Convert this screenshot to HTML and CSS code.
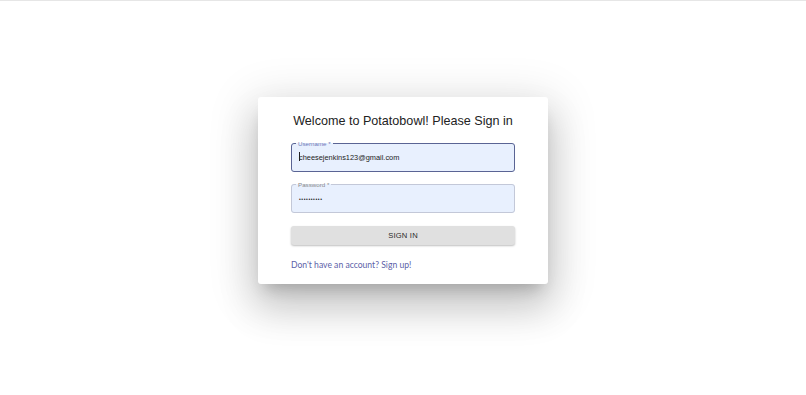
FILE: index.html
```html
<!DOCTYPE html>
<html>
<head>
<meta charset="utf-8">
<link rel="stylesheet" href="styles.css">
</head>
<body>
<div class="topline"></div>
<main class="page">
  <section class="card">
    <h1 class="title">Welcome to Potatobowl! Please Sign in</h1>
    <fieldset class="field field-focus">
      <legend class="legend legend-focus">Username *</legend>
      <div class="value"><span class="caret"></span>cheesejenkins123@gmail.com</div>
    </fieldset>
    <fieldset class="field">
      <legend class="legend">Password *</legend>
      <div class="value dots">••••••••••</div>
    </fieldset>
    <button class="btn">SIGN IN</button>
    <a class="link" href="#">Don't have an account? Sign up!</a>
  </section>
</main>
</body>
</html>
```
FILE: styles.css
```css
html, body { margin: 0; padding: 0; background: #fff; }
body { width: 806px; height: 395px; overflow: hidden; font-family: "Liberation Sans", Arial, sans-serif; }
.topline { height: 1px; background: #e6e6e6; }
.page { display: flex; justify-content: center; padding-top: 96px; }
.card {
  width: 290px; box-sizing: border-box;
  padding: 14px 33px 13px;
  background: #fff; border-radius: 3px;
  box-shadow: 0 11px 15px -7px rgba(0,0,0,0.2), 0 24px 38px 3px rgba(0,0,0,0.14), 0 9px 46px 8px rgba(0,0,0,0.12);
  display: flex; flex-direction: column;
}
.title { margin: 0 0 9px; font-size: 12.6px; font-weight: normal; color: #222; text-align: center; line-height: 20px; }
.field {
  margin: 0 0 9px; padding: 0 7px 7px; min-width: 0;
  border: 1px solid #c3c8d8; border-radius: 3px; background: #e8f0fe;
}
.field-focus { border: 1.5px solid #5a6494; padding-bottom: 7px; }
.field + .field { margin-bottom: 12px; }
.legend { font-size: 6.2px; color: #8a8a8a; padding: 0 2px; margin-left: -3px; line-height: 7px; }
.legend-focus { color: #6d78b8; }
.value { font-size: 7.4px; color: #222; line-height: 12px; height: 12px; margin-top: 5px; }
.caret { display: inline-block; width: 1px; height: 9px; background: #222; vertical-align: -1px; margin-right: -1px; }
.dots { font-size: 5px; letter-spacing: 0.6px; }
.btn {
  margin: 1px 0 0; height: 19px; border: 0; border-radius: 3px;
  background: #e0e0e0; color: #2a2a2a; font-family: "Liberation Sans", Arial, sans-serif; font-weight: normal; font-size: 7.6px; letter-spacing: 0.2px;
  box-shadow: 0 1px 2px rgba(0,0,0,0.25);
}
.link { margin-top: 14px; font-family: Lato, "Open Sans", sans-serif; font-size: 8.6px; color: #5c5fa8; text-decoration: none; line-height: 12px; }
```
